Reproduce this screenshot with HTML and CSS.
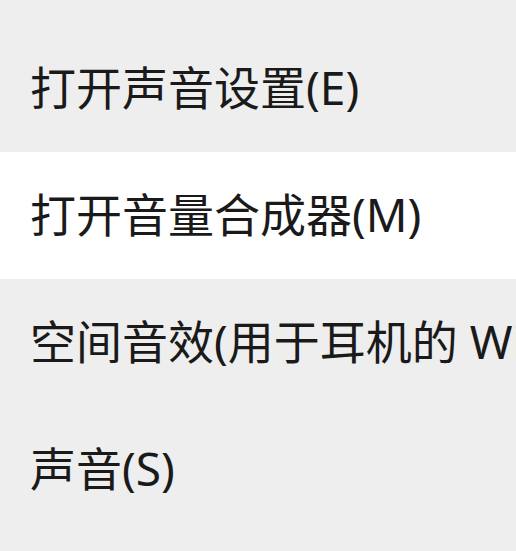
FILE: index.html
```html
<!DOCTYPE html>
<html lang="zh-CN">
<head>
<meta charset="utf-8">
<link rel="stylesheet" href="styles.css">
</head>
<body>
<div class="menu">
  <div class="item">打开声音设置(E)</div>
  <div class="item hover">打开音量合成器(M)</div>
  <div class="item">空间音效(用于耳机的 Windows Sonic)</div>
  <div class="item">声音(S)</div>
</div>
</body>
</html>
```
FILE: styles.css
```css
html, body {
  margin: 0;
  padding: 0;
  background: #eeeeee;
  width: 516px;
  height: 551px;
  overflow: hidden;
}
.menu {
  display: flex;
  flex-direction: column;
  padding-top: 25px;
}
.item {
  height: 127px;
  box-sizing: border-box;
  padding-bottom: 7px;
  display: flex;
  align-items: center;
  padding-left: 30px;
  font-family: "Noto Sans", "Noto Sans CJK SC", sans-serif;
  font-size: 46px;
  color: #1a1a1a;
  white-space: nowrap;
  overflow: hidden;
}
.hover {
  background: #ffffff;
}
```
